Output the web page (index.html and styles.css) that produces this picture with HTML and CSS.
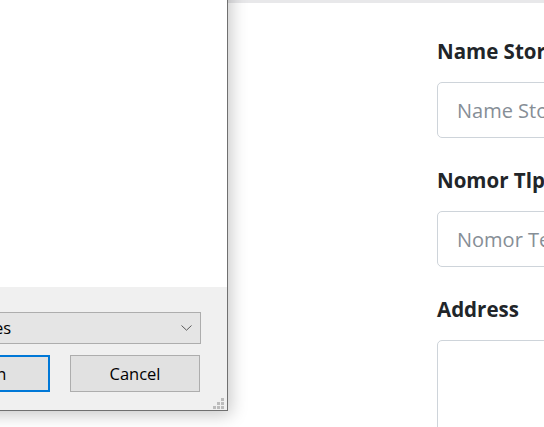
FILE: index.html
```html
<!DOCTYPE html>
<html lang="id">
<head>
<meta charset="utf-8">
<title>Store form</title>
<link rel="stylesheet" href="styles.css">
</head>
<body>
<div class="topbar"></div>
<main class="layout">
  <div class="side"></div>
  <form class="form">
    <div class="field">
      <label class="label" for="store">Name Store</label>
      <input class="control" id="store" type="text" placeholder="Name Store">
    </div>
    <div class="field">
      <label class="label" for="tlp">Nomor Tlp</label>
      <input class="control" id="tlp" type="text" placeholder="Nomor Telepon">
    </div>
    <div class="field">
      <label class="label" for="addr">Address</label>
      <textarea class="control area" id="addr"></textarea>
    </div>
  </form>
</main>

<div class="dialog">
  <div class="dialog-body"></div>
  <div class="dialog-footer">
    <div class="combo">
      <span class="combo-text">All Files</span>
      <svg class="chev" width="11" height="6" viewBox="0 0 11 6"><path d="M0.5 0.5 L5.5 5.2 L10.5 0.5" fill="none" stroke="#5a5a5a" stroke-width="1"/></svg>
    </div>
    <div class="buttons">
      <button class="btn btn-primary" type="button">Open</button>
      <button class="btn" type="button">Cancel</button>
    </div>
    <div class="grip">
      <i></i><i></i><i></i>
      <i></i><i></i><i></i>
      <i></i><i></i><i></i>
    </div>
  </div>
</div>
</body>
</html>
```

FILE: styles.css
```css
html, body {
  margin: 0;
  padding: 0;
  background: #ffffff;
  overflow: hidden;
  height: 100%;
}

body {
  font-family: "Open Sans", "Noto Sans", sans-serif;
  color: #212529;
  position: relative;
}

.topbar {
  height: 3px;
  background: #e8e8ea;
}

.layout {
  display: grid;
  grid-template-columns: 437px 420px;
}

.form {
  padding-top: 33px;
  display: flex;
  flex-direction: column;
  gap: 27px;
}

.field {
  display: flex;
  flex-direction: column;
}

.label {
  font-weight: 700;
  font-size: 20.5px;
  line-height: 30px;
  margin-bottom: 16px;
  white-space: nowrap;
}

.control {
  box-sizing: border-box;
  height: 56px;
  width: 400px;
  border: 1px solid #ced4da;
  border-radius: 5px;
  padding: 0 19px;
  font-family: "Open Sans", sans-serif;
  font-size: 20px;
  color: #495057;
  background: #fff;
}

.control::placeholder {
  color: #868e96;
}

.area {
  height: 120px;
  resize: none;
}

/* Windows file dialog window */
.dialog {
  position: absolute;
  left: -300px;
  top: -100px;
  width: 527px;
  height: 510px;
  background: #ffffff;
  border-right: 1px solid #707070;
  border-bottom: 1px solid #707070;
  box-shadow: 3px 4px 16px rgba(0, 0, 0, 0.22);
  display: flex;
  flex-direction: column;
  font-family: "Open Sans", "Noto Sans", sans-serif;
  font-size: 16.5px;
  color: #000;
}

.dialog-body {
  flex: 1;
  background: #ffffff;
}

.dialog-footer {
  height: 123px;
  background: #f0f0f0;
  box-sizing: border-box;
  padding: 25px 26px 0 0;
  display: flex;
  flex-direction: column;
  align-items: flex-end;
  position: relative;
}

.combo {
  box-sizing: border-box;
  width: 480px;
  height: 32px;
  background: #e5e5e5;
  border: 1px solid #adadad;
  display: flex;
  align-items: center;
  justify-content: space-between;
  padding: 0 8px 0 232px;
}

.combo-text {
  line-height: 30px;
}

.chev {
  display: block;
}

.buttons {
  margin-top: 11px;
  display: flex;
  gap: 20px;
  margin-right: 1px;
}

.btn {
  box-sizing: border-box;
  width: 130px;
  height: 37px;
  background: #e1e1e1;
  border: 1px solid #adadad;
  font-family: "Open Sans", "Noto Sans", sans-serif;
  font-size: 16.5px;
  color: #000;
  padding: 0;
}

.btn-primary {
  border: 2px solid #0078d7;
  text-align: left;
  padding-left: 262px;
  width: 350px;
}

.grip {
  position: absolute;
  right: 3px;
  bottom: 1px;
  display: grid;
  grid-template-columns: repeat(3, 3px);
  grid-template-rows: repeat(3, 3px);
  gap: 1px;
}

.grip i {
  display: block;
  background: #bcbcbc;
}

.grip i:nth-child(1),
.grip i:nth-child(2),
.grip i:nth-child(4) {
  background: transparent;
}
```
